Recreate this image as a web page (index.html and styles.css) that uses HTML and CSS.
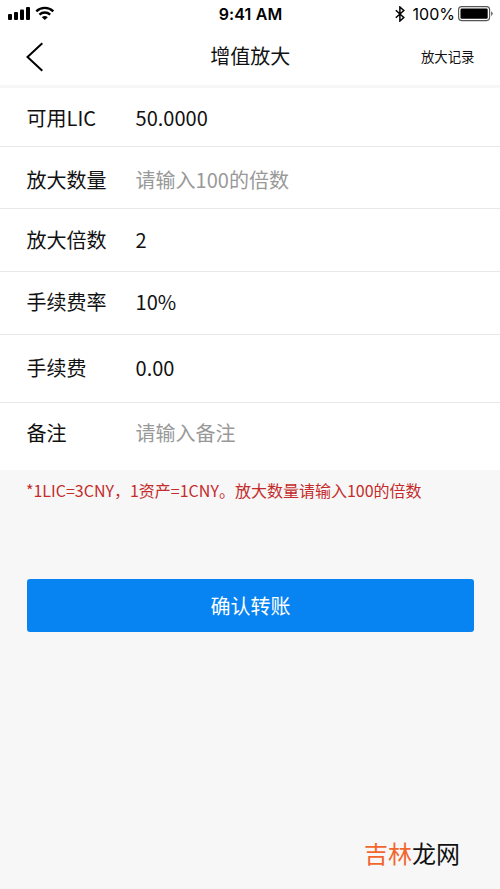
FILE: index.html
```html
<!DOCTYPE html>
<html lang="zh-CN">
<head>
<meta charset="utf-8">
<title>增值放大</title>
<link rel="stylesheet" href="styles.css">
</head>
<body>
<div class="status">
  <svg class="signals" width="48" height="16" viewBox="0 0 48 16">
    <rect x="0" y="10" width="4" height="6" rx="1"/>
    <rect x="6" y="8" width="4" height="8" rx="1"/>
    <rect x="12" y="5.500" width="4" height="10.500" rx="1"/>
    <rect x="18" y="3" width="4" height="13" rx="1"/>
    <g fill="none" stroke="#000" stroke-width="2.300">
      <path d="M28.300 7.300a12.300 12.300 0 0 1 17 0"/>
      <path d="M31.400 10.600a8 8 0 0 1 10.800 0"/>
    </g>
    <path d="M33.800 13.200a4.700 4.700 0 0 1 6 0l-3 2.800z"/>
  </svg>
  <div class="clock">9:41 AM</div>
  <div class="power">
    <svg width="10" height="16" viewBox="0 0 10 16"><path d="M.8 4.300l8 7.200L4.900 15V1l3.900 3.500-8 7.200" fill="none" stroke="#000" stroke-width="1.500"/></svg>
    <span class="percent">100%</span>
    <svg width="36" height="16" viewBox="0 0 36 16"><rect x=".6" y=".6" width="31" height="14" rx="3" fill="none" stroke="#555" stroke-width="1.100"/><rect x="2.500" y="2.500" width="27.200" height="10.200" rx="1.300"/><path d="M33.200 5.200q3 2.400 0 4.800z" fill="#555"/></svg>
  </div>
</div>
<header class="nav">
  <svg class="back" width="18" height="30" viewBox="0 0 18 30"><path d="M16.300 1.200L1.500 15 16.300 28.800" fill="none" stroke="#000" stroke-width="2"/></svg>
  <h1 class="title">增值放大</h1>
  <span class="record">放大记录</span>
</header>
<main class="form">
  <div class="row available"><span class="label">可用LIC</span><span>50.0000</span></div>
  <div class="row amount"><span class="label">放大数量</span><span class="hint">请输入100的倍数</span></div>
  <div class="row multiple"><span class="label">放大倍数</span><span>2</span></div>
  <div class="row rate"><span class="label">手续费率</span><span>10%</span></div>
  <div class="row fee"><span class="label">手续费</span><span>0.00</span></div>
  <div class="row remark"><span class="label">备注</span><span class="hint">请输入备注</span></div>
</main>
<p class="note">*1LIC=3CNY，1资产=1CNY。放大数量请输入100的倍数</p>
<button class="submit">确认转账</button>
<footer class="brand"><span class="accent">吉林</span>龙网</footer>
</body>
</html>
```
FILE: styles.css
```css
* { box-sizing: border-box; }
body {
  margin: 0;
  height: 889px;
  display: flex;
  flex-direction: column;
  overflow: hidden;
  background: #f7f7f7;
  color: #111;
  font: 20px/30px "Noto Sans CJK SC", sans-serif;
}
.status {
  height: 28px;
  flex: none;
  display: grid;
  grid-template-columns: 1fr auto 1fr;
  padding: 0 6px 0 8px;
  background: #fff;
  color: #000;
  font: 16px/28px Inter, sans-serif;
}
.signals { margin-top: 4px; }
.clock { font-weight: 600; letter-spacing: .15px; margin-left: -1px; }
.power {
  display: flex;
  align-items: center;
  justify-content: flex-end;
}
.percent { margin: 0 3px 0 8px; }
.nav {
  height: 57px;
  flex: none;
  display: grid;
  grid-template-columns: 1fr auto 1fr;
  align-items: center;
  padding: 0 25.500px 2px 26px;
  background: #fff;
}
.back { margin-top: 3px; }
.title { margin: 0; font-size: 20px; font-weight: 400; }
.record { justify-self: end; font-size: 13.400px; }
.form { margin-top: 3px; flex: none; background: #fff; }
.row {
  display: flex;
  align-items: flex-start;
  border-bottom: 1px solid #e8e8e8;
  padding-left: 26.600px;
}
.label { width: 109px; }
.available { height: 59px; padding-top: 15px; }
.amount { height: 62px; padding-top: 18px; }
.multiple { height: 63px; padding-top: 16px; }
.rate { height: 63px; padding-top: 15px; }
.fee { height: 68px; padding-top: 18px; }
.remark { height: 67px; padding-top: 15px; border-bottom: 0; }
.hint { color: #999; }
.note {
  margin: 5px 26px 0;
  color: #c42b2b;
  font-size: 16px;
  line-height: 30px;
  white-space: nowrap;
}
.submit {
  margin: 74px 26.500px 0;
  height: 53px;
  flex: none;
  padding: 1px 0 0 1px;
  border: 0;
  border-radius: 3px;
  background: #0883f2;
  color: #fff;
  font: inherit;
}
.brand {
  margin: auto 40px 19px auto;
  color: #111;
  font-size: 24px;
  line-height: 34px;
}
.accent { color: #f2662e; }
```
